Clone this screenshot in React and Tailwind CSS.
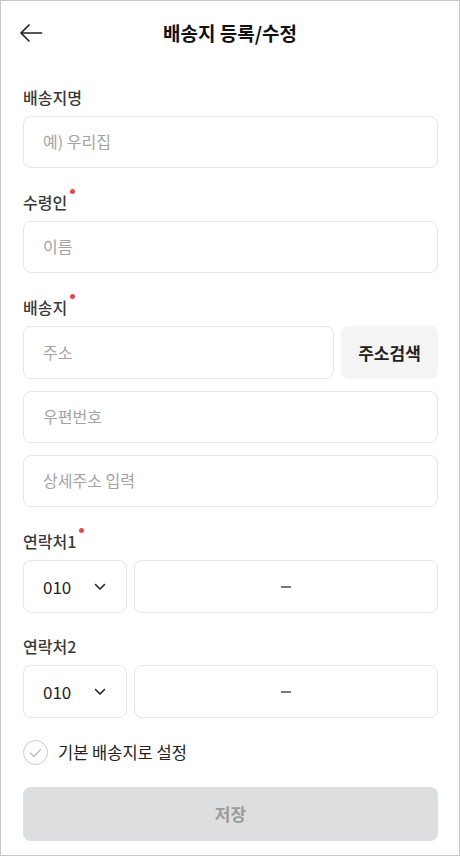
import { useState } from "react";

const font = { fontFamily: '"Noto Sans CJK KR", "Noto Sans", sans-serif' };

const Label = ({ children, required }) => (
    <div className="flex items-start h-5 mb-[9px]">
        <span className="text-[16px] leading-5 font-medium text-[#383838]">{children}</span>
        {required && <span className="ml-[3px] -mt-[3px] w-[5px] h-[5px] rounded-full bg-[#e5484d]" />}
    </div>
);

const Input = ({ placeholder, className = "" }) => (
    <input
        type="text"
        placeholder={placeholder}
        className={`h-[52px] w-full rounded-lg border border-[#e6e6e6] bg-white px-[19px] pb-[2px] text-[16px] text-[#222] placeholder:text-[#a3a3a3] outline-none ${className}`}
        style={font}
    />
);

const PhoneRow = () => (
    <div className="flex gap-[7px]">
        <div className="flex h-[53px] w-[104px] shrink-0 items-center justify-between rounded-lg border border-[#e6e6e6] pl-[19px] pr-[20px]">
            <span className="text-[17px] text-[#222]">010</span>
            <svg width="12" height="8" viewBox="0 0 12 8" fill="none">
                <path d="M1.5 1.5 6 6l4.5-4.5" stroke="#222" strokeWidth="1.6" strokeLinecap="round" strokeLinejoin="round" />
            </svg>
        </div>
        <div className="flex h-[53px] flex-1 items-center justify-center rounded-lg border border-[#e6e6e6]">
            <span className="block h-[2px] w-[10px] bg-[#777]" />
        </div>
    </div>
);

const App = () => {
    const [isDefault, setIsDefault] = useState(false);

    return (
        <div className="h-[856px] w-full overflow-hidden border border-[#c8c8c8] bg-white" style={font}>
            {/* Header */}
            <div className="relative flex h-16 items-center justify-center">
                <button className="absolute left-[18px] top-[21px]">
                    <svg width="24" height="22" viewBox="0 0 24 22" fill="none">
                        <path d="M22.5 11H2M10 3 2 11l8 8" stroke="#222" strokeWidth="1.7" strokeLinecap="round" strokeLinejoin="round" />
                    </svg>
                </button>
                <h1 className="text-[19px] font-bold text-[#111]">배송지 등록/수정</h1>
            </div>

            {/* Form */}
            <div className="pl-[22px] pr-[21px] pt-[22px]">
                <Label>배송지명</Label>
                <Input placeholder="예) 우리집" />

                <div className="mt-[24px]">
                    <Label required>수령인</Label>
                    <Input placeholder="이름" />
                </div>

                <div className="mt-[24px]">
                    <Label required>배송지</Label>
                    <div className="flex flex-col gap-3">
                        <div className="flex gap-[7px]">
                            <Input placeholder="주소" className="h-[53px] flex-1" />
                            <button className="h-[53px] w-[97px] shrink-0 rounded-lg bg-[#f4f4f5] text-[17px] font-bold text-[#222]">
                                주소검색
                            </button>
                        </div>
                        <Input placeholder="우편번호" />
                        <Input placeholder="상세주소 입력" />
                    </div>
                </div>

                <div className="mt-[24px]">
                    <Label required>연락처1</Label>
                    <PhoneRow />
                </div>

                <div className="mt-[23px]">
                    <Label>연락처2</Label>
                    <PhoneRow />
                </div>

                <label className="mt-[22px] flex cursor-pointer items-center gap-[10px]" onClick={() => setIsDefault(!isDefault)}>
                    <span className="flex h-[25px] w-[25px] items-center justify-center rounded-full border border-[#c9c9c9]">
                        <svg width="13" height="10" viewBox="0 0 13 10" fill="none">
                            <path d="M1.5 5 5 8.5 11.5 1.5" stroke={isDefault ? "#222" : "#bdbdbd"} strokeWidth="1.3" strokeLinecap="round" strokeLinejoin="round" />
                        </svg>
                    </span>
                    <span className="text-[16.5px] text-[#222]">기본 배송지로 설정</span>
                </label>

                <button className="mt-[22px] h-[54px] w-full rounded-lg bg-[#dddee0] text-[17px] font-bold text-[#9b9b9b]">
                    저장
                </button>
            </div>
        </div>
    );
};

export default App;
